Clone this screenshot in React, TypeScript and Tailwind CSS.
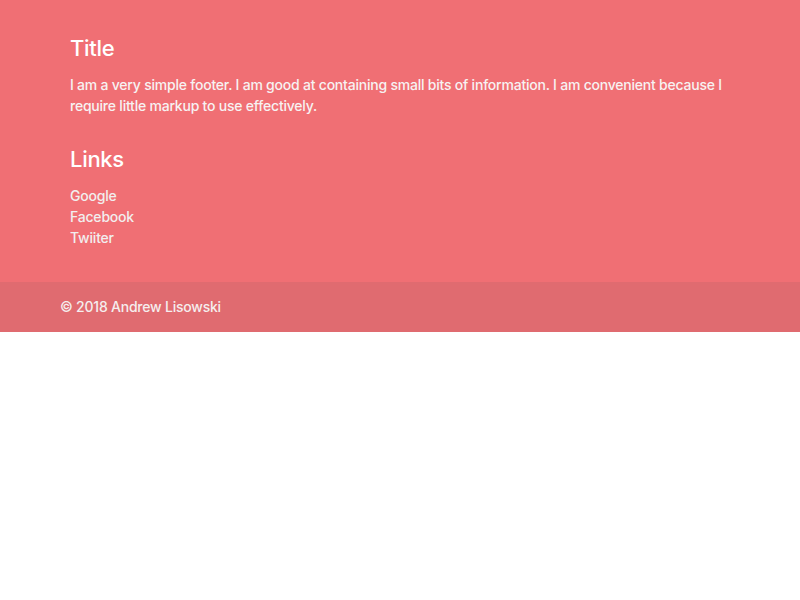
export default function App() {
  return (
    <div className="min-h-[600px] bg-white" style={{ fontFamily: 'Inter, "Noto Sans", sans-serif' }}>
      <footer className="bg-[#f06f74]">
        <div className="px-[70px] pt-[35px] pb-[34px]">
          <h5 className="text-[22px] leading-[26px] font-medium text-white tracking-[-0.3px]">Title</h5>
          <p className="mt-[13px] text-[14px] leading-[21px] font-medium text-[#f7f2f2] max-w-[660px] tracking-[-0.22px]">
            I am a very simple footer. I am good at containing small bits of information. I am convenient because I require little markup to use effectively.
          </p>
          <h5 className="mt-[30px] text-[22px] leading-[26px] font-medium text-white tracking-[-0.3px]">Links</h5>
          <ul className="mt-[13px] text-[14px] leading-[21px] font-medium text-[#f2eeee] tracking-[-0.2px]">
            <li><a href="#">Google</a></li>
            <li><a href="#">Facebook</a></li>
            <li><a href="#">Twiiter</a></li>
          </ul>
        </div>
        <div className="bg-[#e06b70] h-[50px] flex items-center pb-[2px] px-[60px] text-[14px] font-medium text-[#f5eeee] tracking-[-0.22px]">
          © 2018 Andrew Lisowski
        </div>
      </footer>
    </div>
  );
}
